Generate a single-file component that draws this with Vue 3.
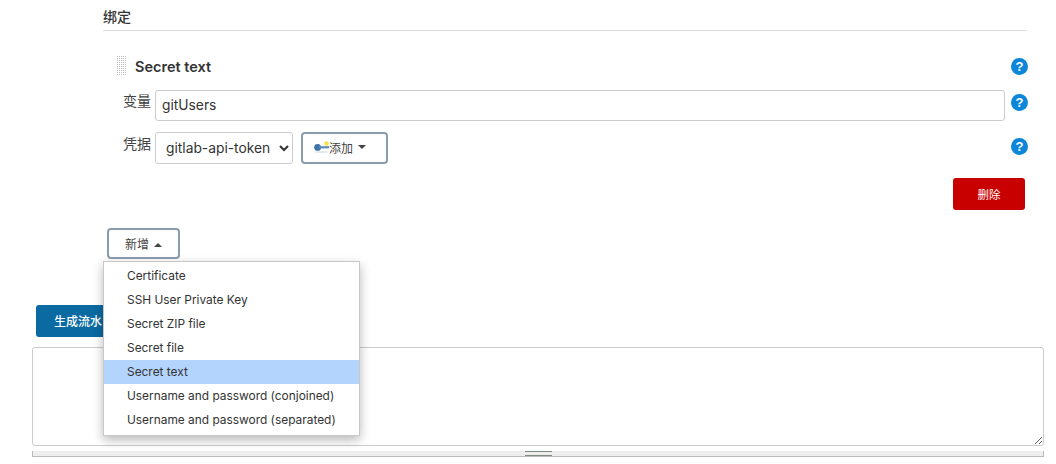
<script setup>
const items = ['Certificate', 'SSH User Private Key', 'Secret ZIP file', 'Secret file', 'Secret text', 'Username and password (conjoined)', 'Username and password (separated)']
</script>

<template>
  <div class="page">
    <section class="binding">
      <h3 class="section-title">绑定</h3>
      <div class="card">
        <div class="card-head">
          <span class="grip"></span>
          <b class="card-title">Secret text</b>
          <span class="help">?</span>
        </div>
        <div class="row row-var">
          <label class="lbl lbl-var">变量</label>
          <input class="text-input" value="gitUsers" />
          <span class="help help-var">?</span>
        </div>
        <div class="row row-cred">
          <label class="lbl lbl-cred">凭据</label>
          <select class="select"><option>gitlab-api-token</option></select>
          <button class="btn-add">
            <svg class="key" viewBox="0 0 15 12" width="15" height="12">
              <ellipse cx="7" cy="11" rx="7" ry="1" fill="#e4e8ec" />
              <circle cx="12.5" cy="2.6" r="2.3" fill="#f5e44a" />
              <circle cx="3.6" cy="6.4" r="3.4" fill="#3f74a8" />
              <rect x="5" y="5.2" width="10" height="2.2" fill="#5b8cbc" />
            </svg>添加<i class="caret-down"></i>
          </button>
          <span class="spacer"></span>
          <span class="help help-cred">?</span>
        </div>
        <div class="del-row"><button class="btn-del">删除</button></div>
      </div>
      <div class="add-wrap">
        <button class="btn-new">新增<i class="caret-up"></i></button>
        <ul class="menu">
          <li v-for="it in items" :key="it" :class="{ active: it === 'Secret text' }">{{ it }}</li>
        </ul>
      </div>
    </section>
    <div class="lower">
      <button class="btn-gen">生成流水</button>
      <textarea class="area"></textarea>
      <div class="handle"><span class="grab"></span></div>
    </div>
  </div>
</template>

<style scoped>
.page { width: 1056px; height: 464px; overflow: hidden; background: #fff; color: #333; font-family: Inter, "Noto Sans CJK SC", sans-serif; box-sizing: border-box; }
.binding { margin: 0 29px 0 103px; }
.section-title { margin: 0; height: 31px; box-sizing: border-box; padding-top: 8px; font-size: 14px; line-height: 17px; font-weight: 500; color: #333; border-bottom: 1px solid #dcdcdc; }
.card { padding: 0 0 0 12px; }
.card-head { display: flex; align-items: center; height: 20px; margin-top: 25px; }
.grip { width: 11px; height: 20px; margin: 0 8px 0 1px; background-image: conic-gradient(#bdbdbd 25%, transparent 0); background-size: 2px 2px; }
.card-title { flex: 1; font-size: 14.5px; font-weight: 600; color: #333; }
.help { flex: none; display: flex; align-items: center; justify-content: center; width: 17px; height: 17px; border-radius: 50%; background: #0b86d9; color: #fff; font: 700 13px/17px "Liberation Sans", sans-serif; margin-left: 6px; margin-right: -1px; }
.help-var { margin-top: -6px; }
.help-cred { margin-top: -2px; }
.row { display: flex; align-items: flex-start; }
.row-var { margin-top: 13px; height: 32px; align-items: center; }
.row-cred { margin-top: 9px; height: 34px; align-items: center; }
.lbl { width: 40px; font-size: 14px; line-height: 18px; color: #444; text-align: right; padding-right: 4px; box-sizing: border-box; }
.lbl-var { margin-top: -8px; }
.lbl-cred { margin-top: -7px; }
.text-input { flex: 1; min-width: 0; height: 31px; box-sizing: border-box; border: 1px solid #ccc; border-radius: 3px; padding: 0 6px; font: 13.8px Inter, sans-serif; color: #333; outline: none; }
.select { width: 138px; height: 32px; box-sizing: border-box; border: 1px solid #ccc; border-radius: 3px; background: #fff; padding: 0 4px 0 6px; font: 13.8px Inter, sans-serif; color: #333; margin-top: 2px; }
.btn-add { display: flex; align-items: center; justify-content: flex-start; width: 87px; height: 32px; margin: 2px 0 0 8px; padding: 0 0 2px 11px; box-sizing: border-box; background: #fff; border: 2px solid #8a9dac; border-radius: 4px; font: 12px "Noto Sans CJK SC", sans-serif; color: #444; }
.caret-down { margin-left: 5px; border-left: 4px solid transparent; border-right: 4px solid transparent; border-top: 4px solid #444; }
.caret-up { margin-left: 5px; display: inline-block; vertical-align: 2px; border-left: 4px solid transparent; border-right: 4px solid transparent; border-bottom: 4px solid #444; }
.spacer { flex: 1; }
.del-row { display: flex; justify-content: flex-end; margin-top: 14px; padding-right: 2px; }
.btn-del { width: 72px; height: 32px; border: 0; border-radius: 3px; background: #c90000; color: #fff; font: 11.5px "Noto Sans CJK SC", sans-serif; }
.add-wrap { position: relative; margin-top: 18px; padding-left: 4px; height: 32px; }
.btn-new { width: 73px; height: 31px; box-sizing: border-box; background: #fff; border: 2px solid #8a9dac; border-radius: 4px; font: 12px "Noto Sans CJK SC", sans-serif; color: #444; padding: 0; }
.menu { position: absolute; left: 0; top: 33px; width: 257px; height: 175px; box-sizing: border-box; z-index: 2; margin: 0; padding: 2px 0 0; list-style: none; background: #fff; border: 1px solid #c8c8c8; box-shadow: 0 4px 10px rgba(0,0,0,.28); }
.menu li { height: 24px; line-height: 24px; padding-left: 23px; font-size: 11.9px; color: #333; white-space: nowrap; }
.menu li.active { background: #b3d4fc; }
.lower { margin: 45px 12px 0 32px; }
.btn-gen { display: block; margin-left: 4px; width: 160px; height: 32px; border: 0; border-radius: 3px; background: #0b6aa2; color: #fff; font: 500 12px "Noto Sans CJK SC", sans-serif; text-align: left; padding: 0 0 2px 18px; }
.area { display: block; width: 100%; height: 99px; margin-top: 10px; box-sizing: border-box; border: 1px solid #ccc; border-radius: 3px; outline: none; background: #fff; }
.handle { display: flex; justify-content: center; align-items: flex-end; height: 5px; margin-top: 5px; background: #eee; border-bottom: 1px solid #bbb; border-left: 1px solid #bbb; border-right: 1px solid #bbb; }
.grab { width: 27px; height: 3px; border-top: 1px solid #7f8a80; border-bottom: 1px solid #7f8a80; }
</style>

<style>
html, body { margin: 0; background: #fff; }
</style>
